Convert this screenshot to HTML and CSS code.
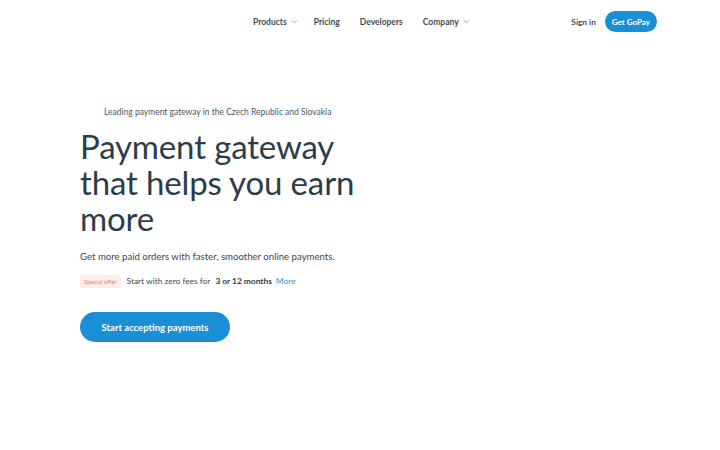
FILE: index.html
```html
<!DOCTYPE html>
<html lang="en">
<head>
<meta charset="utf-8">
<title>GoPay – Payment gateway</title>
<link rel="stylesheet" href="styles.css">
</head>
<body>
<header class="topbar">
  <nav class="main-nav">
    <a class="nav-item products" href="#">Products <svg class="chev" viewBox="0 0 8 5" width="7" height="5"><path d="M1 1l3 3 3-3" fill="none" stroke="currentColor" stroke-width="1"/></svg></a>
    <a class="nav-item" href="#">Pricing</a>
    <a class="nav-item" href="#">Developers</a>
    <a class="nav-item" href="#">Company <svg class="chev" viewBox="0 0 8 5" width="7" height="5"><path d="M1 1l3 3 3-3" fill="none" stroke="currentColor" stroke-width="1"/></svg></a>
  </nav>
  <div class="actions">
    <a class="sign-in" href="#">Sign in</a>
    <a class="btn-small" href="#">Get GoPay</a>
  </div>
</header>
<main class="hero">
  <p class="eyebrow">Leading payment gateway in the Czech Republic and Slovakia</p>
  <h1 class="title">Payment gateway<br>that helps you earn<br>more</h1>
  <p class="lead">Get more paid orders with faster, smoother online payments.</p>
  <p class="offer"><span class="tag">Special offer</span> Start with zero fees for <b>3 or 12 months</b> <a href="#" class="more">More</a></p>
  <a class="btn-main" href="#">Start accepting payments</a>
</main>
</body>
</html>
```
FILE: styles.css
```css
* { box-sizing: border-box; }
body {
  margin: 0;
  background: #fff;
  font-family: Lato, "Noto Sans", sans-serif;
  color: #2c3d4a;
}
a { text-decoration: none; color: inherit; }
.topbar {
  height: 43px;
  display: flex;
  align-items: center;
  padding: 0 63px 0 253px;
}
.main-nav {
  display: flex;
  align-items: center;
  gap: 20px;
  font-size: 8.5px;
  font-weight: 700;
  color: #3f4d58;
}
.nav-item { display: flex; align-items: center; gap: 4px; }
.nav-item.products { margin-right: -4px; }
.chev { color: #8a949c; }
.actions {
  margin-left: auto;
  display: flex;
  align-items: center;
  gap: 9px;
  font-size: 8px;
  font-weight: 700;
}
.sign-in { color: #3f4d58; font-size: 8.3px; }
.btn-small {
  background: #1b8fd5;
  color: #fff;
  border-radius: 11px;
  height: 21px;
  padding: 0 7px;
  display: flex;
  align-items: center;
}
.hero { padding: 63px 0 0 80px; }
.eyebrow {
  margin: 0 0 0 24px;
  font-size: 8.5px;
  color: #4b5761;
  line-height: 12px;
}
.title {
  margin: 10px 0 0;
  font-size: 33px;
  font-weight: 400;
  line-height: 36px;
  color: #2c3d4a;
  letter-spacing: -0.15px;
}
.lead {
  margin: 14px 0 0;
  font-size: 9.6px;
  line-height: 14px;
  color: #3a4853;
}
.offer {
  margin: 11px 0 0;
  font-size: 8.4px;
  line-height: 13px;
  display: flex;
  align-items: center;
  gap: 4px;
  color: #3a4853;
}
.tag {
  background: #fdeeea;
  color: #f07a5c;
  font-size: 6px;
  line-height: 9px;
  padding: 2px 4px;
  border-radius: 2px;
  margin-right: 2px;
}
.offer b { margin-left: 1px; font-weight: 700; color: #2c3d4a; }
.more { color: #2a96d8; margin-left: 0; }
.btn-main {
  margin-top: 24px;
  display: inline-flex;
  align-items: center;
  justify-content: center;
  width: 150px;
  height: 30px;
  border-radius: 15px;
  background: #1b8fd5;
  color: #fff;
  font-size: 9.5px;
  font-weight: 700;
}
```
